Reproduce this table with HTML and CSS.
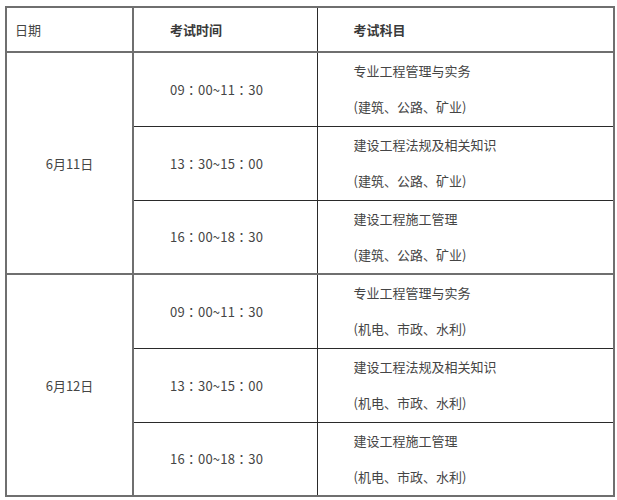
FILE: index.html
```html
<!DOCTYPE html>
<html lang="zh">
<head>
<meta charset="utf-8">
<link rel="stylesheet" href="styles.css">
</head>
<body>
<table class="sched">
  <colgroup>
    <col class="c-date">
    <col class="c-time">
    <col class="c-subj">
  </colgroup>
  <thead>
    <tr class="head">
      <th class="date-h">日期</th>
      <th class="time-h">考试时间</th>
      <th class="subj-h">考试科目</th>
    </tr>
  </thead>
  <tbody class="group">
    <tr class="row">
      <td class="date" rowspan="3">6月11日</td>
      <td class="time">09：00~11：30</td>
      <td class="subj"><div class="line">专业工程管理与实务</div><div class="line">(建筑、公路、矿业)</div></td>
    </tr>
    <tr class="row">
      <td class="time">13：30~15：00</td>
      <td class="subj"><div class="line">建设工程法规及相关知识</div><div class="line">(建筑、公路、矿业)</div></td>
    </tr>
    <tr class="row">
      <td class="time">16：00~18：30</td>
      <td class="subj"><div class="line">建设工程施工管理</div><div class="line">(建筑、公路、矿业)</div></td>
    </tr>
  </tbody>
  <tbody class="group">
    <tr class="row">
      <td class="date" rowspan="3">6月12日</td>
      <td class="time">09：00~11：30</td>
      <td class="subj"><div class="line">专业工程管理与实务</div><div class="line">(机电、市政、水利)</div></td>
    </tr>
    <tr class="row">
      <td class="time">13：30~15：00</td>
      <td class="subj"><div class="line">建设工程法规及相关知识</div><div class="line">(机电、市政、水利)</div></td>
    </tr>
    <tr class="row">
      <td class="time">16：00~18：30</td>
      <td class="subj"><div class="line">建设工程施工管理</div><div class="line">(机电、市政、水利)</div></td>
    </tr>
  </tbody>
</table>
</body>
</html>
```
FILE: styles.css
```css
html, body {
  margin: 0;
  padding: 0;
  background: #ffffff;
}
body {
  padding: 6px 0 0 5px;
  font-family: "Noto Sans CJK SC", "Noto Sans", sans-serif;
  font-size: 13px;
  color: #454545;
}
.sched {
  border-collapse: collapse;
  table-layout: fixed;
  width: 608px;
  border: 2px solid #6f6f6f;
}
.c-date { width: 127px; }
.c-time { width: 184px; }
.c-subj { width: 297px; }
th, td {
  border: 1px solid #2a2a2a;
  padding: 0;
  text-align: left;
  vertical-align: middle;
}
.head { height: 45px; }
.head th {
  border-bottom: 2px solid #6f6f6f;
  font-weight: normal;
}
.date-h {
  padding-left: 8px;
  border-right: 2px solid #6f6f6f;
}
.time-h, .subj-h {
  padding-left: 36px;
  font-weight: bold !important;
  color: #3a3a3a;
}
.group { border-top: 2px solid #6f6f6f; }
.row { height: 74px; }
.date {
  text-align: center;
  border-right: 2px solid #6f6f6f;
}
.time {
  padding-left: 36px;
  font-family: "Noto Sans CJK TC", "Noto Sans CJK SC", sans-serif;
  letter-spacing: 0.2px;
}
.subj { padding-left: 36px; }
.line { line-height: 36px; }
```
